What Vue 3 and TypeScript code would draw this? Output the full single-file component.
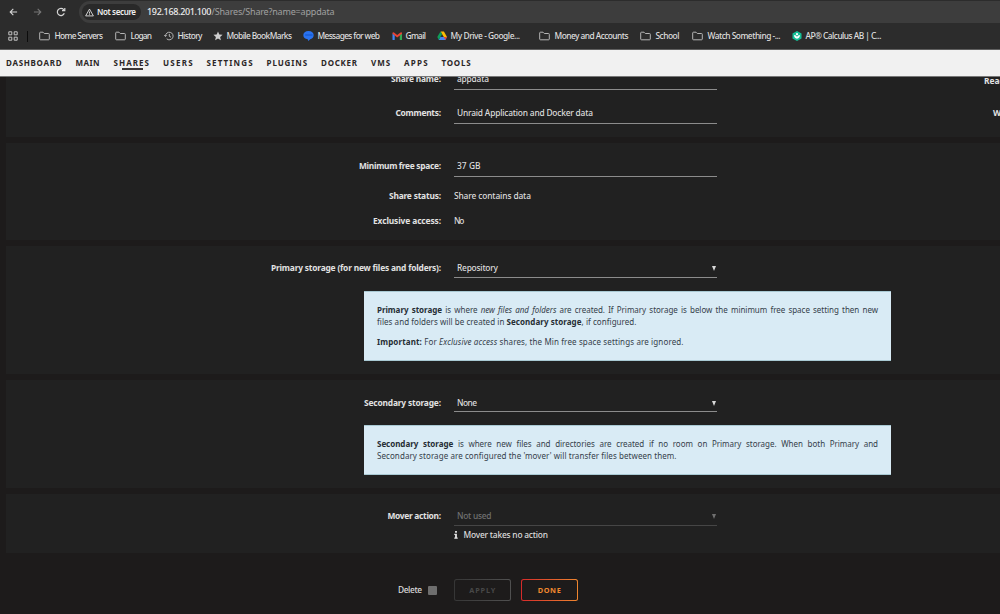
<script setup lang="ts">
interface Bookmark {
  icon: 'folder' | 'history' | 'star' | 'message' | 'gmail' | 'drive' | 'ap'
  label: string
  width: number
}

interface MenuItem {
  label: string
  width: number
}

const bookmarks: Bookmark[] = [
  { icon: 'folder', label: 'Home Servers', width: 48.5 },
  { icon: 'folder', label: 'Logan', width: 21.5 },
  { icon: 'history', label: 'History', width: 25 },
  { icon: 'star', label: 'Mobile BookMarks', width: 65.5 },
  { icon: 'message', label: 'Messages for web', width: 62.5 },
  { icon: 'gmail', label: 'Gmail', width: 20.5 },
  { icon: 'drive', label: 'My Drive - Google...', width: 69.5 },
  { icon: 'folder', label: 'Money and Accounts', width: 74 },
  { icon: 'folder', label: 'School', width: 24 },
  { icon: 'folder', label: 'Watch Something -...', width: 73 },
  { icon: 'ap', label: 'AP® Calculus AB | C...', width: 76 },
]

const menu: MenuItem[] = [
  { label: 'DASHBOARD', width: 55.5 },
  { label: 'MAIN', width: 24 },
  { label: 'SHARES', width: 35.5 },
  { label: 'USERS', width: 29.5 },
  { label: 'SETTINGS', width: 46 },
  { label: 'PLUGINS', width: 40.5 },
  { label: 'DOCKER', width: 36 },
  { label: 'VMS', width: 19 },
  { label: 'APPS', width: 23.5 },
  { label: 'TOOLS', width: 29 },
]

// Tracks a text run so that its glyphs span the given width in pixels.
const vFit = {
  mounted(el: HTMLElement, binding: { value: number }) {
    const count = (el.textContent ?? '').length
    if (count < 2) return
    el.style.letterSpacing = '0px'
    const natural = el.getBoundingClientRect().width
    const spacing = (binding.value - natural) / (count - 1)
    el.style.letterSpacing = `${spacing}px`
    el.style.marginRight = `${-spacing}px`
  },
}
</script>

<template>
  <div class="window">
    <header class="browser">
      <div class="toolbar">
        <svg class="nav back" viewBox="0 0 10 10"><path d="M9 5H1.4M4.8 1.5 1.3 5l3.5 3.5" /></svg>
        <svg class="nav forward" viewBox="0 0 10 10"><path d="M1 5h7.6M5.2 1.5 8.7 5 5.2 8.5" /></svg>
        <svg class="nav reload" viewBox="0 0 10 10"><path d="M8.3 6.3A3.6 3.6 0 1 1 7.7 2.6L8.6 3.5" /><path d="M8.8.9v2.8H6" /></svg>
        <div class="address">
          <div class="security">
            <svg class="warn" viewBox="0 0 10 10"><path d="M5 1.2 9.3 8.8H.7Z" /><path d="M5 4v2.3M5 7v.9" /></svg>
            <span v-fit="39" class="run">Not secure</span>
          </div>
          <span v-fit="64.5" class="run host">192.168.201.100</span>
          <span v-fit="123" class="run path">/Shares/Share?name=appdata</span>
        </div>
      </div>
      <nav class="bookmarks">
        <svg class="apps" viewBox="0 0 10 10"><path d="M.8.8h3v3h-3zM6.2.8h3v3h-3zM.8 6.2h3v3h-3zM6.2 6.2h3v3h-3z" /></svg>
        <i class="divider"></i>
        <div v-for="b in bookmarks" :key="b.label" class="bookmark" :class="b.icon">
          <svg v-if="b.icon === 'folder'" viewBox="0 0 11 10"><path class="line" d="M.7 8V2Q.7 1.2 1.5 1.2H4L5.3 2.5H9.5Q10.3 2.5 10.3 3.3V8Q10.3 8.8 9.5 8.8H1.5Q.7 8.8.7 8Z" /></svg>
          <svg v-else-if="b.icon === 'history'" viewBox="0 0 11 10"><path class="line" d="M1.5 5A3.8 3.8 0 1 1 2.7 7.8M.2 4.2 1.5 5.6 2.8 4.3M5.3 2.9V5.3L7 6.2" /></svg>
          <svg v-else-if="b.icon === 'star'" viewBox="0 0 11 10"><path fill="#cfcfcf" d="m5 .4 1.3 3 3.3.3-2.5 2.2.8 3.3L5 7.5 2.1 9.2l.8-3.3L.4 3.7l3.3-.3z" /></svg>
          <svg v-else-if="b.icon === 'message'" viewBox="0 0 11 10"><path fill="#2a72ee" d="M5.5 0C8.7 0 10.7 1.7 10.7 4.1S8.9 8 7.2 8.2L5.3 10 4.7 8.2C2 8 .3 6.5.3 4.1S2.4 0 5.5 0Z" /><path fill="#1258d4" d="M2.2 3.4h7.3v1.2H2.2z" /></svg>
          <svg v-else-if="b.icon === 'gmail'" viewBox="0 0 11 10"><path fill="#4285f4" d="M.5 2.5 2.7 4v5H1Q.5 9 .5 8.5z" /><path fill="#34a853" d="M7.8 4 10 2.5v6q0 .5-.5.5H7.8z" /><path fill="#ea4335" d="M.5 2.8V1.8Q1 .8 2 1.4L5.2 3.9 8.5 1.4Q9.6.8 10 1.8v1L5.2 6.5z" /></svg>
          <svg v-else-if="b.icon === 'drive'" viewBox="0 0 11 10"><path fill="#fbbc04" d="M3.6.5h3.3L10 6.1H6.8z" /><path fill="#4285f4" d="M3.3 6.1H10L8.4 9H1.7z" /><path fill="#0f9d58" d="M3.5.5.3 6.1 1.8 9 5.1 3.1z" /><path fill="#ea4335" d="M6.8 6.1H10L8.4 9z" /></svg>
          <svg v-else viewBox="0 0 11 10"><path fill="#14bf96" d="m5 0 4.5 2.5v5L5 10 .5 7.5v-5z" /><path fill="#fff" d="M2.1 4.1Q4 4 5 5.8 6 4 7.9 4.1 8 7.4 5 7.7 2 7.4 2.1 4.1Z" /><circle cx="5" cy="3.2" r="1.1" fill="#fff" /></svg>
          <span v-fit="b.width" class="run">{{ b.label }}</span>
        </div>
      </nav>
    </header>

    <nav class="menu">
      <span v-for="m in menu" :key="m.label" class="menu-item" :class="{ active: m.label === 'SHARES' }">
        <span v-fit="m.width" class="run">{{ m.label }}</span>
      </span>
    </nav>

    <main class="page">
      <section class="panel identity">
        <div class="row field">
          <label><span v-fit="50" class="run">Share name:</span></label>
          <div class="input"><span v-fit="32" class="run">appdata</span></div>
          <label class="side side-read">Read</label>
        </div>
        <div class="row field">
          <label><span v-fit="45.5" class="run">Comments:</span></label>
          <div class="input"><span v-fit="136" class="run">Unraid Application and Docker data</span></div>
          <label class="side side-write">Write</label>
        </div>
      </section>

      <section class="panel space">
        <div class="row field">
          <label><span v-fit="82" class="run">Minimum free space:</span></label>
          <div class="input"><span v-fit="23.5" class="run">37 GB</span></div>
        </div>
        <div class="row status">
          <label><span v-fit="52" class="run">Share status:</span></label>
          <div><span v-fit="77" class="run">Share contains data</span></div>
        </div>
        <div class="row access">
          <label><span v-fit="68" class="run">Exclusive access:</span></label>
          <div><span v-fit="10.5" class="run">No</span></div>
        </div>
      </section>

      <section class="panel primary">
        <div class="row field">
          <label><span v-fit="170" class="run">Primary storage (for new files and folders):</span></label>
          <div class="input select"><span v-fit="41" class="run">Repository</span><i class="caret"></i></div>
        </div>
        <blockquote class="help">
          <p>
            <span class="justified"><b>Primary storage</b> is where <em>new files and folders</em> are created. If Primary storage is below the minimum free space setting then new</span>
            <span v-fit="259.5" class="run">files and folders will be created in <b>Secondary storage</b>, if configured.</span>
          </p>
          <p><span v-fit="306.5" class="run"><b>Important:</b> For <em>Exclusive access</em> shares, the Min free space settings are ignored.</span></p>
        </blockquote>
      </section>

      <section class="panel secondary">
        <div class="row field">
          <label><span v-fit="77" class="run">Secondary storage:</span></label>
          <div class="input select"><span v-fit="20" class="run">None</span><i class="caret"></i></div>
        </div>
        <blockquote class="help">
          <p>
            <span class="justified"><b>Secondary storage</b> is where new files and directories are created if no room on Primary storage. When both Primary and</span>
            <span v-fit="299.5" class="run">Secondary storage are configured the 'mover' will transfer files between them.</span>
          </p>
        </blockquote>
      </section>

      <section class="panel mover">
        <div class="row field">
          <label><span v-fit="53.5" class="run">Mover action:</span></label>
          <div class="input select disabled"><span v-fit="34.5" class="run">Not used</span><i class="caret"></i></div>
        </div>
        <div class="row note">
          <div class="note-text">
            <svg viewBox="0 0 4 8"><path d="M1.1 0h1.8v1.7H1.1zM.3 2.8h2.6v3.7h.8v1.2H.3V6.5h.8V4H.3z" /></svg>
            <span v-fit="84.5" class="run">Mover takes no action</span>
          </div>
        </div>
      </section>

      <div class="actions">
        <div class="delete"><span v-fit="24" class="run">Delete</span><i class="checkbox"></i></div>
        <button class="apply" disabled><span v-fit="26" class="run">APPLY</span></button>
        <button class="done"><span v-fit="23" class="run">DONE</span></button>
      </div>
    </main>
  </div>
</template>

<style>
html,
body {
  margin: 0;
  background: #1d1b1b;
  overflow: hidden;
}
</style>

<style scoped>
.window {
  width: 1000px;
  height: 614px;
  overflow: hidden;
  display: flex;
  flex-direction: column;
  background: #1d1b1b;
  color: #dcdcdc;
  font-family: "Noto Sans", "Open Sans", sans-serif;
  font-size: 8.4px;
  font-weight: 500;
  line-height: 12px;
  box-sizing: border-box;
}
.window * {
  box-sizing: border-box;
}
.run {
  display: inline-block;
  white-space: pre;
  flex: none;
}
svg {
  display: block;
  flex: none;
}

.browser {
  height: 50px;
  flex: none;
  background: #2c2c2c;
  border-bottom: 1px solid #606060;
}
.toolbar {
  height: 23px;
  display: flex;
  align-items: center;
  padding: 1px 0 0 9px;
}
.nav {
  width: 9px;
  height: 10px;
  fill: none;
  stroke: #d6d6d6;
  stroke-width: 1.2;
}
.forward {
  margin-left: 15px;
  stroke: #777;
}
.reload {
  margin-left: 14px;
  width: 10px;
}
.address {
  flex: 1;
  height: 22px;
  margin-left: 13px;
  padding-left: 3px;
  display: flex;
  align-items: center;
  background: #3d3d3d;
  border-radius: 11px 0 0 11px;
  font-size: 9px;
}
.security {
  width: 59px;
  height: 16px;
  margin-right: 6px;
  padding-left: 3px;
  display: flex;
  align-items: center;
  gap: 3px;
  border-radius: 8px;
  background: #292929;
  color: #f0f0f0;
  font-size: 8px;
  font-weight: 600;
}
.warn {
  width: 9px;
  height: 9px;
  fill: none;
  stroke: #e0e0e0;
  stroke-width: 1;
}
.host {
  color: #ededed;
}
.path {
  color: #a0a0a0;
  font-weight: 400;
}
.bookmarks {
  height: 26px;
  padding-left: 7.5px;
  display: grid;
  grid-template-columns: 19px 12px 76px 49px 49px 90px 89px 45px 102px 101px 52px 100px 100px;
  align-items: center;
  color: #dedede;
}
.apps {
  width: 10px;
  height: 10px;
  fill: none;
  stroke: #c4c4c4;
  stroke-width: 1;
}
.divider {
  width: 1px;
  height: 11px;
  background: #0c0c0c;
}
.bookmark {
  display: flex;
  align-items: center;
  gap: 3px;
}
.bookmark svg {
  width: 11px;
  height: 10px;
}
.bookmark.folder {
  gap: 5px;
}
.bookmark.message {
  gap: 4px;
}
.line {
  fill: none;
  stroke: #b4b4b4;
  stroke-width: 1;
}

.menu {
  height: 27px;
  flex: none;
  display: flex;
  align-items: center;
  gap: 14px;
  padding-left: 6px;
  background: #f1f1f1;
  border-bottom: 1px solid #777;
  color: #2b2626;
  font-size: 8px;
  font-weight: 700;
}
.menu-item {
  position: relative;
  display: flex;
}
.menu-item.active::after {
  content: "";
  position: absolute;
  left: 8px;
  bottom: -1px;
  width: 21px;
  height: 2px;
  background: #3b3636;
}

.page {
  flex: 1;
  min-height: 0;
  overflow: hidden;
  padding-left: 6px;
  display: flex;
  flex-direction: column;
}
.panel {
  flex: none;
  background: #212121;
  margin-bottom: 6px;
}
.row {
  display: grid;
  grid-template-columns: 435px 263px 1fr;
  column-gap: 13px;
}
.row label {
  text-align: right;
  font-weight: 700;
  color: #e2e2e2;
}
.input {
  height: 17px;
  padding-left: 3px;
  border-bottom: 1px solid #8c8c8c;
  display: flex;
  align-items: flex-start;
}
.select {
  justify-content: space-between;
}
.caret {
  width: 4px;
  height: 5px;
  margin: 4px 1px 0 0;
  background: #d8d8d8;
  clip-path: polygon(0 0, 100% 0, 50% 100%);
}
.disabled {
  color: #707070;
  border-color: #464646;
  height: 16px;
}
.disabled .caret {
  background: #707070;
}

.identity {
  height: 80px;
  margin-top: -20px;
  padding-top: 16px;
}
.identity .field + .field {
  margin-top: 17px;
}
.row .side {
  text-align: left;
  overflow: hidden;
  white-space: nowrap;
}
.side-read {
  padding: 2px 0 0 254px;
}
.side-write {
  padding-left: 263px;
}

.space {
  height: 97px;
  padding-top: 17px;
}
.status {
  margin-top: 13px;
}
.access {
  margin-top: 13px;
}

.primary {
  height: 128px;
  padding-top: 16px;
}
.primary .input {
  height: 16px;
}
.help {
  width: 527px;
  margin: 13px 0 0 358px;
  padding: 12px 13px 0;
  background: #d9ebf5;
  border: 1px solid #a9c9d3;
  border-width: 1px 0;
  color: #35404a;
  font-size: 8px;
  font-weight: 400;
  line-height: 11.6px;
}
.primary .help {
  height: 70px;
}
.secondary .help {
  height: 50px;
}
.help p {
  margin: 0 0 9px;
  display: flex;
  flex-direction: column;
  align-items: flex-start;
}
.help b {
  color: #252d34;
  font-weight: 700;
}
.justified {
  display: block;
  width: 501px;
  text-align: justify;
  text-align-last: justify;
  letter-spacing: -0.03px;
}

.secondary {
  height: 108px;
  padding-top: 17px;
}
.secondary .input {
  height: 15px;
}
.mover {
  height: 59px;
  padding-top: 16px;
}
.note-text {
  grid-column: 2;
  display: flex;
  align-items: center;
  gap: 5.5px;
  margin-top: 3px;
}
.note-text svg {
  width: 4px;
  height: 8px;
  fill: #e6e6e6;
}

.actions {
  margin-top: 20px;
  padding-left: 392px;
  display: flex;
  align-items: center;
  flex: none;
}
.delete {
  width: 56px;
  display: flex;
  align-items: center;
  gap: 6px;
}
.checkbox {
  width: 9px;
  height: 9px;
  background: #6e6e6e;
  border-radius: 1px;
}
button {
  width: 56.5px;
  height: 22px;
  padding: 0;
  border: 1.5px solid transparent;
  border-radius: 2.5px;
  display: flex;
  align-items: center;
  justify-content: center;
  font: 700 7.3px/12px "Noto Sans", sans-serif;
}
.apply {
  color: #484848;
  background: linear-gradient(#1d1b1b, #1d1b1b) padding-box, linear-gradient(90deg, #363636, #505050) border-box;
}
.done {
  margin-left: 10.5px;
  color: #f0882f;
  background: linear-gradient(#1d1b1b, #1d1b1b) padding-box, linear-gradient(90deg, #d52a2a, #ef862f) border-box;
}
</style>
